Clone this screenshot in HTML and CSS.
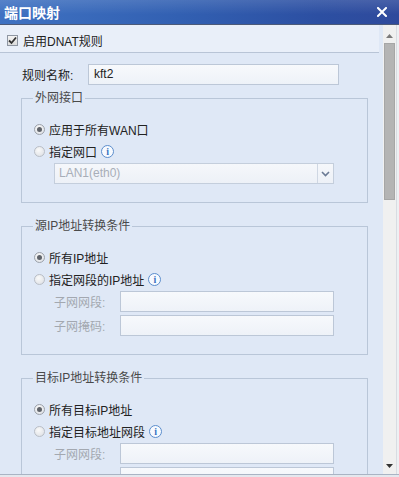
FILE: index.html
```html
<!DOCTYPE html>
<html lang="zh-CN">
<head>
    <meta charset="UTF-8">
    <title>端口映射</title>
    <link rel="stylesheet" href="styles.css">
</head>
<body>
    <div class="window">
        <div class="titlebar">
            <span class="title">端口映射</span>
            <svg class="close" width="10" height="10" viewBox="0 0 10 10">
                <path d="M1 1 L9 9 M9 1 L1 9" stroke="#fff" stroke-width="2" stroke-linecap="square"/>
            </svg>
        </div>

        <div class="body">
            <div class="main">
                <div class="check-row">
                    <span class="checkbox">
                        <svg width="9" height="9" viewBox="0 0 9 9">
                            <path d="M1 4.5 L3.5 7 L8 1.5" fill="none" stroke="#333" stroke-width="1.8"/>
                        </svg>
                    </span>
                    <span>启用DNAT规则</span>
                </div>

                <div class="form">
                    <div class="name-row">
                        <span class="name-label">规则名称:</span>
                        <div class="input name-input">kft2</div>
                    </div>

                    <fieldset class="group">
                        <legend>外网接口</legend>
                        <div class="radio-row"><span class="radio checked"></span>应用于所有WAN口</div>
                        <div class="radio-row"><span class="radio"></span>指定网口<span class="info">i</span></div>
                        <div class="select">
                            <span class="select-text">LAN1(eth0)</span>
                            <span class="select-btn">
                                <svg width="9" height="6" viewBox="0 0 9 6">
                                    <path d="M1 1 L4.5 4.5 L8 1" fill="none" stroke="#6a7a94" stroke-width="1.6"/>
                                </svg>
                            </span>
                        </div>
                    </fieldset>

                    <fieldset class="group">
                        <legend>源IP地址转换条件</legend>
                        <div class="radio-row"><span class="radio checked"></span>所有IP地址</div>
                        <div class="radio-row"><span class="radio"></span>指定网段的IP地址<span class="info">i</span></div>
                        <div class="sub-row">
                            <span class="sub-label">子网网段:</span>
                            <div class="input sub-input"></div>
                        </div>
                        <div class="sub-row">
                            <span class="sub-label">子网掩码:</span>
                            <div class="input sub-input"></div>
                        </div>
                    </fieldset>

                    <fieldset class="group">
                        <legend>目标IP地址转换条件</legend>
                        <div class="radio-row"><span class="radio checked"></span>所有目标IP地址</div>
                        <div class="radio-row"><span class="radio"></span>指定目标地址网段<span class="info">i</span></div>
                        <div class="sub-row">
                            <span class="sub-label">子网网段:</span>
                            <div class="input sub-input"></div>
                        </div>
                        <div class="sub-row">
                            <span class="sub-label"></span>
                            <div class="input sub-input"></div>
                        </div>
                    </fieldset>
                </div>
            </div>

            <div class="scrollbar">
                <svg class="arrow" width="7" height="4" viewBox="0 0 7 4"><path d="M0 4 L3.5 0 L7 4 Z" fill="#7a7a7a"/></svg>
                <div class="thumb"></div>
                <div class="track"></div>
                <svg class="arrow" width="7" height="4" viewBox="0 0 7 4"><path d="M0 0 L3.5 4 L7 0 Z" fill="#333"/></svg>
            </div>
            <div class="edge"></div>
        </div>
    </div>
</body>
</html>
```

FILE: styles.css
```css
* {
    margin: 0;
    padding: 0;
    box-sizing: border-box;
}

body {
    width: 399px;
    height: 477px;
    overflow: hidden;
    font-family: "Liberation Sans", "Noto Sans CJK SC", sans-serif;
    font-size: 12px;
    color: #222;
    background: #e4e8ee;
}

.window {
    display: flex;
    flex-direction: column;
    height: 477px;
}

.titlebar {
    height: 25px;
    display: flex;
    align-items: center;
    justify-content: space-between;
    padding: 0 12px 0 4px;
    background: linear-gradient(to bottom, rgba(255,255,255,0.12), rgba(255,255,255,0) 60%),
                linear-gradient(to right, #3f72c2, #3260b2 45%, #2c4fa2 80%, #2f4a9c);
    border-bottom: 1px solid #4c5a78;
}

.title {
    color: #fff;
    font-size: 14px;
    font-weight: bold;
}

.body {
    display: flex;
    height: 450px;
    border-bottom: 1px solid #a9b4c4;
}

.main {
    width: 383px;
    overflow: hidden;
    background: #dfe8f6;
}

.check-row {
    height: 28px;
    display: flex;
    align-items: center;
    gap: 5px;
    padding: 4px 0 0 7px;
    margin-right: 4px;
    background: #e9eff9;
    border-bottom: 1px solid #b8c4d6;
}

.checkbox {
    width: 11px;
    height: 11px;
    display: flex;
    align-items: center;
    justify-content: center;
    border: 1px solid #8e96a2;
    background: linear-gradient(#f4f4f4, #dcdcdc);
}

.form {
    padding: 11px 0 0 21px;
}

.name-row {
    display: flex;
    align-items: center;
    height: 21px;
}

.name-label {
    width: 67px;
    padding-left: 1px;
}

.input {
    height: 21px;
    border: 1px solid #bcc7d7;
    background: linear-gradient(#f7f9fc, #eef2f8);
    padding: 0 5px;
    line-height: 19px;
}

.name-input {
    width: 251px;
    color: #222;
}

.group {
    width: 347px;
    margin-top: 6px;
    border: 1px solid #b9c6d8;
    padding: 13px 0 18px 12px;
}

.group + .group {
    margin-top: 16px;
}

.group legend {
    margin-left: -1px;
    padding: 0 2px;
    line-height: 14px;
    color: #4a4a4a;
}

.radio-row {
    height: 22px;
    display: flex;
    align-items: center;
}

.radio {
    width: 11px;
    height: 11px;
    border-radius: 50%;
    border: 1px solid #b9bec6;
    background: radial-gradient(circle at 40% 35%, #fafafa, #dadde2);
    margin-right: 4px;
    position: relative;
}

.radio.checked {
    border-color: #9ca2ab;
}

.radio.checked::after {
    content: "";
    position: absolute;
    left: 2px;
    top: 2px;
    width: 5px;
    height: 5px;
    border-radius: 50%;
    background: #5f636a;
}

.info {
    width: 13px;
    height: 13px;
    margin-left: 4px;
    border-radius: 50%;
    border: 1px solid #5b8dcc;
    background: #f7faff;
    color: #3b73c2;
    font-family: "Liberation Serif", serif;
    font-weight: bold;
    font-size: 10px;
    line-height: 11px;
    text-align: center;
}

.select {
    width: 280px;
    height: 21px;
    margin: 1px 0 0 20px;
    display: flex;
    border: 1px solid #c4cedc;
    background: linear-gradient(#f5f7fb, #edf1f7);
}

.select-text {
    flex: 1;
    padding-left: 4px;
    line-height: 19px;
    color: #a8aeb8;
}

.select-btn {
    width: 16px;
    display: flex;
    align-items: center;
    justify-content: center;
    border-left: 1px solid #cfd7e3;
}

.sub-row {
    display: flex;
    align-items: center;
    margin-top: 3px;
    padding-left: 20px;
}

.radio-row + .sub-row {
    margin-top: 1px;
}

.sub-label {
    width: 66px;
    color: #a3a8b0;
}

.sub-input {
    width: 214px;
}

.scrollbar {
    width: 13px;
    display: flex;
    flex-direction: column;
    align-items: center;
    background: #f0f0f0;
    padding-top: 9px;
}

.arrow {
    flex-shrink: 0;
}

.thumb {
    width: 11px;
    height: 157px;
    margin-top: 5px;
    background: #b4b4b4;
    border: 1px solid #a6a6a6;
}

.track {
    flex: 1;
}

.scrollbar .arrow:last-child {
    margin-bottom: 6px;
}

.edge {
    width: 3px;
    background: #eef0f3;
    border-left: 1px solid #d8dce2;
}
```
